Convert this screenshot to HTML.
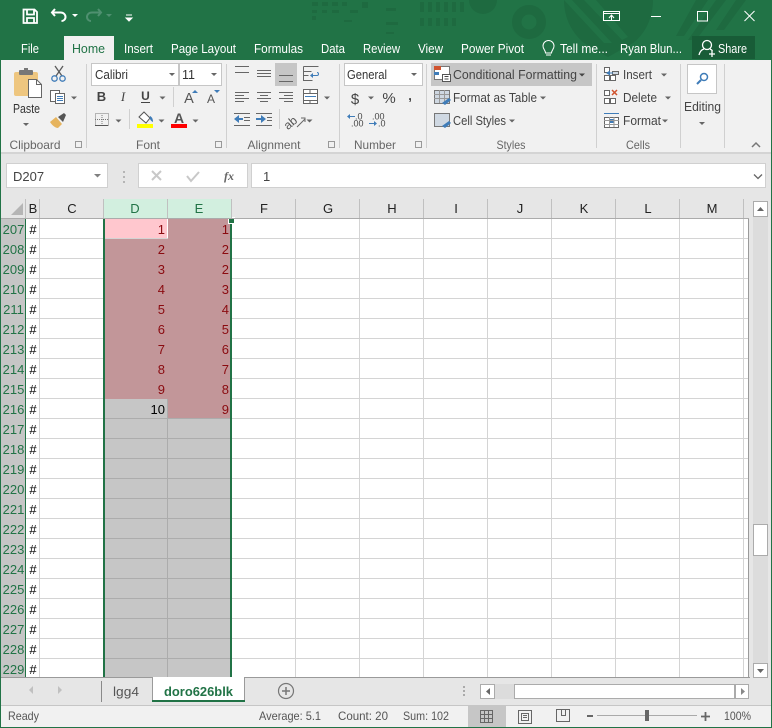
<!DOCTYPE html>
<html><head><meta charset="utf-8"><style>
html,body{margin:0;padding:0;width:772px;height:728px;overflow:hidden;background:#f1f1f1}
svg{display:block}
text{font-family:"Liberation Sans",sans-serif;font-size:12.5px;fill:#444}
.t{fill:#fff;font-size:12.5px}
.g{fill:#666;font-size:12px;text-anchor:middle}
.h{font-size:13px;fill:#222;text-anchor:middle}
.hs{font-size:13px;fill:#217346;text-anchor:middle}
.r{font-size:13px;fill:#217346;text-anchor:middle}
.n{font-size:13px;fill:#000;text-anchor:middle}
.c{font-size:13px;fill:#8a0b10;text-anchor:end}
.sb{font-size:12px;fill:#555}
</style></head><body>
<svg width="772" height="728" viewBox="0 0 772 728" xmlns="http://www.w3.org/2000/svg">
<!-- title bar -->
<rect width="772" height="60" fill="#217346"/>
<g fill="#1e6a40">
<circle cx="529" cy="22" r="11" fill="none" stroke="#1e6a40" stroke-width="7"/>
<circle cx="529" cy="22" r="15" fill="none" stroke="#1e6a40" stroke-width="4"/>
<path d="M469 0h28a14 14 0 0 1-28 0z"/>
<path d="M564 0h89c0 18-8 34-20 43l-25 14-24-14c-12-10-20-25-20-43z"/>
<path d="M696 0h12l-24 36h-8zM716 0h10l-30 40h-8zM736 0h10l-22 30h-8z"/>
<path d="M312 2h6v4h-6zM322 2h6v4h-6zM332 2h6v4h-6zM342 2h5v4h-5zM312 10h5v3h-5zM322 10h5v3h-5zM332 10h7v3h-7zM350 10h8v3h-8zM362 2h6v6h-6zM312 16h4v4h-4zM344 20h8v2h-8zM420 2h4v10h-4zM428 2h4v10h-4zM436 2h4v10h-4zM444 2h4v10h-4zM452 2h4v10h-4zM460 2h4v10h-4zM420 18h4v8h-4zM428 18h4v8h-4zM436 18h4v8h-4zM444 18h4v8h-4zM452 18h4v8h-4zM386 8h10v3h-10zM386 22h12v3h-12zM386 32h8v2h-8z"/>
</g>
<path d="M564 0l40 43h8L572 0zM584 0l38 40 6-3L596 0z" fill="#217346"/>
<!-- QAT -->
<path d="M23.500 9.500h11l2.500 2.500v11h-13.500z M27 9.500v5h7v-5 M27 23v-5h7v5" fill="none" stroke="#fff" stroke-width="1.800"/>
<path d="M55 9l-3 3.500 3 3.500M52.500 12.500h8c3 0 5 2 5 4.500s-2 4-4 4" fill="none" stroke="#fff" stroke-width="2"/>
<path d="M72 14h6l-3 3z" fill="#fff"/>
<path d="M98 9l3 3.500-3 3.500M100 12.500h-8c-3 0-5 2-5 4.500s2 4 4 4" fill="none" stroke="#4f9070" stroke-width="2"/>
<path d="M106 14h6l-3 3z" fill="#4f9070"/>
<path d="M126 15h6M126 18h6l-3 3z" fill="#fff" stroke="#fff" stroke-width="1"/>
<!-- window controls -->
<rect x="603.500" y="11.500" width="16" height="9" fill="none" stroke="#fff"/><path d="M603 13.500h17" stroke="#fff"/><path d="M609 18l2.500-3 2.500 3M611.500 15v5" fill="none" stroke="#fff"/>
<path d="M651 16.500h10" stroke="#fff" stroke-width="1"/>
<rect x="697.500" y="11.500" width="10" height="9.500" fill="none" stroke="#fff"/>
<path d="M744.500 11l10 10M754.500 11l-10 10" stroke="#fff" stroke-width="1"/>
<!-- tabs -->
<rect x="64" y="36" width="50" height="25" fill="#f1f1f1"/>
<rect x="692" y="36" width="63" height="23" fill="#185c37"/>
<text class="t" x="21" y="53" textLength="18" lengthAdjust="spacingAndGlyphs">File</text>
<text x="72" y="53" textLength="33" lengthAdjust="spacingAndGlyphs" style="fill:#217346">Home</text>
<text class="t" x="124" y="53" textLength="29" lengthAdjust="spacingAndGlyphs">Insert</text>
<text class="t" x="171" y="53" textLength="65" lengthAdjust="spacingAndGlyphs">Page Layout</text>
<text class="t" x="254" y="53" textLength="49" lengthAdjust="spacingAndGlyphs">Formulas</text>
<text class="t" x="321" y="53" textLength="24" lengthAdjust="spacingAndGlyphs">Data</text>
<text class="t" x="363" y="53" textLength="37" lengthAdjust="spacingAndGlyphs">Review</text>
<text class="t" x="418" y="53" textLength="25" lengthAdjust="spacingAndGlyphs">View</text>
<text class="t" x="461" y="53" textLength="63" lengthAdjust="spacingAndGlyphs">Power Pivot</text>
<path d="M545.500 53c0-3-2.500-3.500-2.500-7a5.500 5.500 0 0 1 11 0c0 3.500-2.500 4-2.500 7zM546 55h5" fill="none" stroke="#fff"/>
<text class="t" x="560" y="53" textLength="48" lengthAdjust="spacingAndGlyphs">Tell me...</text>
<text class="t" x="620" y="53" textLength="62" lengthAdjust="spacingAndGlyphs">Ryan Blun...</text>
<circle cx="707" cy="45" r="4.500" fill="none" stroke="#fff" stroke-width="1.300"/>
<path d="M699 55c1-4 3-5.500 5-6M710 49c1 .5 2 1 2.500 2M709 54h6M712 51v6" fill="none" stroke="#fff" stroke-width="1.300"/>
<text class="t" x="718" y="53" textLength="29" lengthAdjust="spacingAndGlyphs">Share</text>

<!-- ribbon -->
<rect x="1" y="60" width="770" height="92" fill="#f1f1f1"/>
<rect x="0" y="152" width="772" height="2" fill="#d4d4d4"/>
<rect y="154" width="772" height="45" fill="#e6e6e6"/>
<g fill="#d0d0d0">
<rect x="86" y="64" width="1" height="84"/><rect x="226" y="64" width="1" height="84"/><rect x="339" y="64" width="1" height="84"/><rect x="426" y="64" width="1" height="84"/><rect x="596" y="64" width="1" height="84"/><rect x="680" y="64" width="1" height="84"/><rect x="724" y="64" width="1" height="84"/>
<rect x="173" y="87" width="1" height="20"/><rect x="129" y="109" width="1" height="20"/><rect x="279" y="109" width="1" height="20"/>
</g>
<!-- clipboard -->
<rect x="14" y="72" width="24" height="24" rx="2" fill="#eec67f"/>
<rect x="19" y="70" width="14" height="5" rx="1" fill="#777"/><rect x="24" y="68" width="4" height="4" fill="#777"/>
<path d="M28.500 79.500h8l5 5v13h-13z" fill="#fff" stroke="#666"/><path d="M36.500 79.500v5h5" fill="none" stroke="#666"/>
<text x="13" y="113" textLength="27" lengthAdjust="spacingAndGlyphs" style="fill:#333">Paste</text>
<path d="M23 123h6l-3 3z" fill="#666"/>
<path d="M55 66l7 10M63 66l-7 10" fill="none" stroke="#5a5a5a" stroke-width="1.300"/>
<circle cx="54.500" cy="78.500" r="2.700" fill="none" stroke="#3f7cb8" stroke-width="1.300"/><circle cx="62.500" cy="78.500" r="2.700" fill="none" stroke="#3f7cb8" stroke-width="1.300"/>
<rect x="50.500" y="90.500" width="9" height="11" fill="#fff" stroke="#666"/><rect x="55.500" y="93.500" width="9" height="10" fill="#fff" stroke="#666"/><path d="M57 96.500h6M57 98.500h6M57 100.500h6" stroke="#3f7cb8"/>
<path d="M71 96.500h6l-3 3z" fill="#666"/>
<path d="M50 122l6-5 6 7-4 4c-3 0-6-3-8-6z" fill="#e6b45e"/><path d="M58 117l6-4 2 2-3 7z" fill="#555"/>
<text class="g" x="35" y="149" textLength="51" lengthAdjust="spacingAndGlyphs">Clipboard</text>
<!-- font -->
<rect x="91.500" y="63.500" width="87" height="22" fill="#fff" stroke="#c6c6c6"/>
<rect x="179.500" y="63.500" width="42" height="22" fill="#fff" stroke="#c6c6c6"/>
<text x="95" y="79" textLength="33" lengthAdjust="spacingAndGlyphs" style="fill:#333">Calibri</text>
<text x="182" y="79" style="fill:#333">11</text>
<path d="M169 73h6l-3 3zM211 73h6l-3 3z" fill="#666"/>
<text x="101.500" y="101" style="font:bold 13px 'Liberation Sans';fill:#444" text-anchor="middle">B</text>
<text x="123" y="101" style="font:italic 13px 'Liberation Serif';fill:#444" text-anchor="middle">I</text>
<text x="145.500" y="100" style="font:bold 12px 'Liberation Sans';fill:#444" text-anchor="middle">U</text>
<path d="M141 102.500h9" stroke="#444"/>
<path d="M159.500 96.500h6l-3 3z" fill="#666"/>
<text x="189" y="103" style="font-size:14.500px;fill:#555" text-anchor="middle">A</text>
<path d="M192 93l3-3 3 3z" fill="#3f7cb8"/>
<text x="211" y="103" style="font-size:12px;fill:#555" text-anchor="middle">A</text>
<path d="M214 90h6l-3 3z" fill="#3f7cb8"/>
<rect x="95.500" y="113.500" width="13" height="12" fill="none" stroke="#777" stroke-dasharray="1 1"/><path d="M102 113v12M95 119.500h13" stroke="#777" stroke-dasharray="1 1"/><path d="M95 125.500h13" stroke="#555"/>
<path d="M115.500 119.500h6l-3 3z" fill="#666"/>
<path d="M139 117l5-5 6 6-4 5z" fill="#fff" stroke="#555"/><path d="M150 116c2 1 3 3 3 6-2-1-4-3-3-6z" fill="#3f7cb8"/>
<rect x="137" y="124" width="16" height="4" fill="#ffff00"/>
<path d="M158.500 119.500h6l-3 3z" fill="#666"/>
<text x="179" y="123" style="font:bold 14px 'Liberation Sans';fill:#555" text-anchor="middle">A</text>
<rect x="171" y="124" width="16" height="4" fill="#ff0000"/>
<path d="M192.500 119.500h6l-3 3z" fill="#666"/>
<text class="g" x="148" y="149" textLength="24" lengthAdjust="spacingAndGlyphs">Font</text>
<!-- alignment -->
<rect x="275" y="63" width="22" height="23" fill="#c6c6c6"/>
<g stroke="#666" fill="none">
<path d="M235 66.500h14M235 72.500h14"/>
<path d="M257 70.500h14M257 73.500h14M257 76.500h14"/>
<path d="M279 75.500h14M279 81.500h14"/>
<path d="M235 92.500h14M235 95.500h9M235 98.500h14M235 101.500h9"/>
<path d="M257 92.500h14M260 95.500h8M257 98.500h14M260 101.500h8"/>
<path d="M279 92.500h14M284 95.500h9M279 98.500h14M284 101.500h9"/>
<path d="M234 113.500h16M244 117.500h6M244 120.500h6M234 125.500h16"/>
<path d="M256 113.500h16M267 117.500h5M267 120.500h5M256 125.500h16"/>
<path d="M303.500 66.500h15M303.500 66.500v14h9M303.500 71.500h8M303.500 75.500h5"/>
<rect x="303.500" y="89.500" width="14" height="14" fill="#fff"/>
<path d="M303 93.500h15M303 100.500h15M310 89v4M310 100v4"/>
</g>
<path d="M311 75.500h6c2 0 2-3 0-3" stroke="#3f7cb8" fill="none"/><path d="M313 73l-3 2.500 3 2.500z" fill="#3f7cb8"/>
<path d="M305 96.500h11" stroke="#3f7cb8"/>
<path d="M324 96.500h6l-3 3z" fill="#666"/>
<path d="M234 119l5-4v8zM239 118h4v2h-4z" fill="#3f7cb8"/><path d="M266 119l-5-4v8zM256 118h5v2h-5z" fill="#3f7cb8"/>
<text x="293" y="126" transform="rotate(-40 293 126)" style="font-size:12px;fill:#555" text-anchor="middle">ab</text>
<path d="M297 127l8-8M301 118h4v4" stroke="#666" fill="none"/>
<path d="M306.500 119.500h6l-3 3z" fill="#666"/>
<text class="g" x="274" y="149" textLength="53" lengthAdjust="spacingAndGlyphs">Alignment</text>
<!-- number -->
<rect x="344.500" y="63.500" width="78" height="22" fill="#fff" stroke="#c6c6c6"/>
<text x="347" y="79" textLength="40" lengthAdjust="spacingAndGlyphs" style="fill:#333">General</text>
<path d="M411 73h6l-3 3z" fill="#666"/>
<text x="355" y="104" style="font-size:15px;fill:#444" text-anchor="middle">$</text>
<path d="M368 96.500h6l-3 3z" fill="#666"/>
<text x="389" y="103" style="font-size:15px;fill:#444" text-anchor="middle">%</text>
<text x="410" y="100" style="font:bold 13px 'Liberation Sans';fill:#444" text-anchor="middle">,</text>
<text x="355" y="119.500" style="font-size:9px;fill:#444">.0</text><text x="351" y="126.500" style="font-size:9px;fill:#444">.00</text>
<path d="M347 116.500l3-2.500v5zM350 116h5v1h-5z" fill="#3f7cb8"/>
<text x="372" y="119.500" style="font-size:9px;fill:#444">.00</text><text x="378" y="126.500" style="font-size:9px;fill:#444">.0</text>
<path d="M377 123.500l-3-2.500v5zM369 123h5v1h-5z" fill="#3f7cb8"/>
<text class="g" x="375" y="149" textLength="42" lengthAdjust="spacingAndGlyphs">Number</text>
<path d="M75.500 141.500h6v6h-6zM215.500 141.500h6v6h-6zM328.500 141.500h6v6h-6zM415.500 141.500h6v6h-6z" fill="none" stroke="#999"/>
<!-- styles -->
<rect x="431" y="63" width="161" height="23" fill="#c6c6c6"/>
<rect x="434.500" y="66.500" width="15" height="13" fill="#fff" stroke="#777"/><rect x="434" y="66" width="7" height="4" fill="#d0532e"/><rect x="434" y="72" width="5" height="3" fill="#3f7cb8"/><rect x="442.500" y="74.500" width="8" height="7" fill="#fff" stroke="#555"/><path d="M444.500 76.500h4M444.500 79h4" stroke="#444"/>
<rect x="434.500" y="90.500" width="15" height="13" fill="#cfd8e2" stroke="#777"/><path d="M434 94.500h15M434 98.500h15M439.500 90v13M444.500 90v13" stroke="#999"/><path d="M442 103l7-5 2 2-6 5z" fill="#3f7cb8"/>
<rect x="434.500" y="113.500" width="15" height="13" fill="#cfd8e2" stroke="#777"/><path d="M442 126l7-5 2 2-6 5z" fill="#3f7cb8"/>
<text x="453" y="79" textLength="124" lengthAdjust="spacingAndGlyphs">Conditional Formatting</text>
<path d="M579 73.500h6l-3 3z" fill="#444"/>
<text x="453" y="102" textLength="84" lengthAdjust="spacingAndGlyphs">Format as Table</text>
<path d="M540 96.500h6l-3 3z" fill="#666"/>
<text x="453" y="125" textLength="53" lengthAdjust="spacingAndGlyphs">Cell Styles</text>
<path d="M509 119.500h6l-3 3z" fill="#666"/>
<text class="g" x="511" y="149" textLength="29" lengthAdjust="spacingAndGlyphs">Styles</text>
<!-- cells -->
<g stroke="#666" fill="#fff">
<path d="M604.500 67.500h5v5h-5zM604.500 75.500h5v5h-5zM610.500 75.500h5v5h-5z"/>
<path d="M612.500 71.500h6v3h-6z" fill="#cfd8e2"/>
<path d="M604.500 90.500h5v5h-5zM604.500 98.500h5v5h-5zM610.500 98.500h5v5h-5z"/>
<rect x="604.500" y="117.500" width="14" height="10"/>
</g>
<path d="M606 73l4-2.500v2h3v1h-3v2z" fill="#3f7cb8"/>
<path d="M612 90l5 5M617 90l-5 5" stroke="#d0532e" stroke-width="1.500"/>
<path d="M604 113.500h15" stroke="#3f7cb8"/><rect x="609" y="119" width="5" height="4" fill="#3f7cb8"/><path d="M604 120.500h15M604 124.500h15M609.500 117v10M614 117v10" stroke="#999"/>
<text x="623" y="79" textLength="29" lengthAdjust="spacingAndGlyphs">Insert</text>
<text x="623" y="102" textLength="34" lengthAdjust="spacingAndGlyphs">Delete</text>
<text x="623" y="125" textLength="38" lengthAdjust="spacingAndGlyphs">Format</text>
<path d="M661 73.500h6l-3 3zM665 96.500h6l-3 3zM662 119.500h6l-3 3z" fill="#666"/>
<text class="g" x="638" y="149" textLength="24" lengthAdjust="spacingAndGlyphs">Cells</text>
<!-- editing -->
<rect x="687.500" y="64.500" width="29" height="29" fill="#fff" stroke="#c6c6c6"/>
<circle cx="704" cy="77" r="3.500" fill="none" stroke="#3f7cb8" stroke-width="1.500"/><path d="M701 80l-4 4" stroke="#3f7cb8" stroke-width="2"/>
<text x="684" y="111" textLength="37" lengthAdjust="spacingAndGlyphs">Editing</text>
<path d="M699 122h6l-3 3z" fill="#666"/>
<path d="M752 147l4-4 4 4" fill="none" stroke="#777" stroke-width="1.500"/>
<!-- formula bar -->
<rect x="6.500" y="163.500" width="101" height="24" fill="#fff" stroke="#d0d0d0"/>
<text x="13" y="181" style="font-size:13px;fill:#444">D207</text>
<path d="M94 174h7l-3.500 3.500z" fill="#808080"/>
<path d="M123 171h2v2h-2zM123 176h2v2h-2zM123 181h2v2h-2z" fill="#b5b5b5"/>
<rect x="138.500" y="163.500" width="109" height="24" fill="#fff" stroke="#d0d0d0"/>
<path d="M152 171l9 9M161 171l-9 9" stroke="#c8c8c8" stroke-width="2"/>
<path d="M187 176l4 5 8-9" fill="none" stroke="#c8c8c8" stroke-width="2"/>
<text x="229" y="180" style="font:italic bold 12px 'Liberation Serif';fill:#666" text-anchor="middle">fx</text>
<rect x="251.500" y="163.500" width="514" height="24" fill="#fff" stroke="#d0d0d0"/>
<text x="263" y="181" style="font-size:13px;fill:#444">1</text>
<path d="M754 174.500l4 4 4-4" fill="none" stroke="#666" stroke-width="1.300"/>

<!-- grid -->
<rect x="1" y="199" width="770" height="479" fill="#e6e6e6"/>
<rect x="40" y="219" width="709" height="459" fill="#fff"/>
<rect x="26" y="219" width="14" height="459" fill="#fff"/>
<rect x="1" y="219" width="24" height="459" fill="#c6c6c6"/>
<g stroke="#d4d4d4">
<path d="M26 238.500h723M26 258.500h723M26 278.500h723M26 298.500h723M26 318.500h723M26 338.500h723M26 358.500h723M26 378.500h723M26 398.500h723M26 418.500h723M26 438.500h723M26 458.500h723M26 478.500h723M26 498.500h723M26 518.500h723M26 538.500h723M26 558.500h723M26 578.500h723M26 598.500h723M26 618.500h723M26 638.500h723M26 658.500h723"/>
<path d="M39.500 219v459M103.500 219v459M295.500 219v459M359.500 219v459M423.500 219v459M487.500 219v459M551.500 219v459M615.500 219v459M679.500 219v459M743.500 219v459"/>
</g>
<!-- selection -->
<rect x="105" y="399" width="62" height="279" fill="#c6c6c6"/>
<rect x="168" y="419" width="62" height="259" fill="#c6c6c6"/>
<rect x="105" y="239" width="63" height="160" fill="#c29699"/>
<rect x="168" y="219" width="62" height="200" fill="#c29699"/>
<rect x="105" y="219" width="62" height="19" fill="#ffc7ce"/>
<path d="M105 418.500h125M105 438.500h125M105 458.500h125M105 478.500h125M105 498.500h125M105 518.500h125M105 538.500h125M105 558.500h125M105 578.500h125M105 598.500h125M105 618.500h125M105 638.500h125M105 658.500h125M167.500 399v279" stroke="#acacac"/>
<rect x="103" y="219" width="2" height="459" fill="#217346"/>
<rect x="230" y="219" width="2" height="459" fill="#217346"/>
<rect x="25" y="219" width="1" height="459" fill="#217346"/>
<rect x="228" y="217" width="7" height="7" fill="#fff"/>
<rect x="229" y="218" width="5" height="5" fill="#217346"/>
<rect x="26" y="677" width="724" height="1" fill="#9a9a9a"/>
<rect x="748" y="219" width="1" height="459" fill="#9a9a9a"/>
<!-- col headers -->
<rect x="104" y="199" width="128" height="19" fill="#d2efdf"/>
<rect x="0" y="218" width="749" height="1" fill="#ababab"/>
<path d="M25.500 199v19M39.500 199v19M103.500 199v19M167.500 199v19M231.500 199v19M295.500 199v19M359.500 199v19M423.500 199v19M487.500 199v19M551.500 199v19M615.500 199v19M679.500 199v19M743.500 199v19" stroke="#c0c0c0"/>
<path d="M23 203v12h-12z" fill="#b5b5b5"/>
<text class="h" x="33" y="213">B</text><text class="h" x="72" y="213">C</text>
<text class="hs" x="135" y="213">D</text><text class="hs" x="199" y="213">E</text>
<text class="h" x="264" y="213">F</text><text class="h" x="328" y="213">G</text><text class="h" x="392" y="213">H</text><text class="h" x="456" y="213">I</text><text class="h" x="520" y="213">J</text><text class="h" x="584" y="213">K</text><text class="h" x="648" y="213">L</text><text class="h" x="712" y="213">M</text>
<!-- row labels -->
<text class="r" x="13.500" y="234">207</text><text class="r" x="13.500" y="254">208</text><text class="r" x="13.500" y="274">209</text><text class="r" x="13.500" y="294">210</text><text class="r" x="13.500" y="314">211</text><text class="r" x="13.500" y="334">212</text><text class="r" x="13.500" y="354">213</text><text class="r" x="13.500" y="374">214</text><text class="r" x="13.500" y="394">215</text><text class="r" x="13.500" y="414">216</text><text class="r" x="13.500" y="434">217</text><text class="r" x="13.500" y="454">218</text><text class="r" x="13.500" y="474">219</text><text class="r" x="13.500" y="494">220</text><text class="r" x="13.500" y="514">221</text><text class="r" x="13.500" y="534">222</text><text class="r" x="13.500" y="554">223</text><text class="r" x="13.500" y="574">224</text><text class="r" x="13.500" y="594">225</text><text class="r" x="13.500" y="614">226</text><text class="r" x="13.500" y="634">227</text><text class="r" x="13.500" y="654">228</text><text class="r" x="13.500" y="674">229</text>
<!-- hashes -->
<text class="n" x="33" y="234">#</text><text class="n" x="33" y="254">#</text><text class="n" x="33" y="274">#</text><text class="n" x="33" y="294">#</text><text class="n" x="33" y="314">#</text><text class="n" x="33" y="334">#</text><text class="n" x="33" y="354">#</text><text class="n" x="33" y="374">#</text><text class="n" x="33" y="394">#</text><text class="n" x="33" y="414">#</text><text class="n" x="33" y="434">#</text><text class="n" x="33" y="454">#</text><text class="n" x="33" y="474">#</text><text class="n" x="33" y="494">#</text><text class="n" x="33" y="514">#</text><text class="n" x="33" y="534">#</text><text class="n" x="33" y="554">#</text><text class="n" x="33" y="574">#</text><text class="n" x="33" y="594">#</text><text class="n" x="33" y="614">#</text><text class="n" x="33" y="634">#</text><text class="n" x="33" y="654">#</text><text class="n" x="33" y="674">#</text>
<!-- values -->
<text class="c" x="165" y="234">1</text><text class="c" x="165" y="254">2</text><text class="c" x="165" y="274">3</text><text class="c" x="165" y="294">4</text><text class="c" x="165" y="314">5</text><text class="c" x="165" y="334">6</text><text class="c" x="165" y="354">7</text><text class="c" x="165" y="374">8</text><text class="c" x="165" y="394">9</text><text class="c" x="165" y="414" style="fill:#000">10</text>
<text class="c" x="229" y="234">1</text><text class="c" x="229" y="254">2</text><text class="c" x="229" y="274">2</text><text class="c" x="229" y="294">3</text><text class="c" x="229" y="314">4</text><text class="c" x="229" y="334">5</text><text class="c" x="229" y="354">6</text><text class="c" x="229" y="374">7</text><text class="c" x="229" y="394">8</text><text class="c" x="229" y="414">9</text>
<!-- v scroll -->
<rect x="753" y="201" width="15" height="477" fill="#dcdcdc"/>
<rect x="753.500" y="201.500" width="14" height="15" fill="#fff" stroke="#ababab"/>
<path d="M757 211h7l-3.500-4z" fill="#666"/>
<rect x="753.500" y="524.500" width="14" height="31" fill="#fff" stroke="#ababab"/>
<rect x="753.500" y="663.500" width="14" height="14" fill="#fff" stroke="#ababab"/>
<path d="M757 669h7l-3.500 4z" fill="#666"/>
<!-- sheet tabs -->
<rect x="1" y="678" width="770" height="27" fill="#e6e6e6"/>
<rect x="1" y="677" width="748" height="1" fill="#9a9a9a"/>
<path d="M33 686v8l-4-4zM58 686v8l4-4z" fill="#c0c0c0"/>
<rect x="101" y="681" width="1" height="21" fill="#8a8a8a"/>
<text x="113" y="696" textLength="26" lengthAdjust="spacingAndGlyphs" style="fill:#555;font-size:13px">lgg4</text>
<rect x="153" y="677" width="91" height="24" fill="#fff"/>
<rect x="152" y="700" width="93" height="2" fill="#217346"/>
<path d="M152.500 678v22M244.500 678v22" stroke="#9a9a9a"/>
<text x="164" y="696" textLength="69" lengthAdjust="spacingAndGlyphs" style="fill:#217346;font-size:13px;font-weight:bold">doro626blk</text>
<circle cx="286" cy="691" r="7.500" fill="none" stroke="#777" stroke-width="1.200"/><path d="M282 691h8M286 687v8" stroke="#777" stroke-width="1.500"/>
<path d="M463 686h2v2h-2zM463 690h2v2h-2zM463 694h2v2h-2z" fill="#aaa"/>
<rect x="494" y="684" width="20" height="15" fill="#dcdcdc"/>
<rect x="480.500" y="684.500" width="14" height="14" fill="#fff" stroke="#ababab"/>
<path d="M490 688v7l-4-3.500z" fill="#666"/>
<rect x="514.500" y="684.500" width="220" height="14" fill="#fff" stroke="#ababab"/>
<rect x="735.500" y="684.500" width="13" height="14" fill="#fff" stroke="#ababab"/>
<path d="M741 688v7l4-3.500z" fill="#888"/>
<!-- status -->
<rect x="1" y="705" width="770" height="1" fill="#c6c6c6"/>
<rect x="1" y="706" width="770" height="21" fill="#f1f1f1"/>
<rect x="468" y="706" width="38" height="21" fill="#c6c6c6"/>
<text class="sb" x="8" y="720" textLength="31" lengthAdjust="spacingAndGlyphs">Ready</text>
<text class="sb" x="259" y="720" textLength="62" lengthAdjust="spacingAndGlyphs">Average: 5.1</text>
<text class="sb" x="338" y="720" textLength="50" lengthAdjust="spacingAndGlyphs">Count: 20</text>
<text class="sb" x="403" y="720" textLength="46" lengthAdjust="spacingAndGlyphs">Sum: 102</text>
<g stroke="#666" fill="none">
<rect x="480.500" y="710.500" width="12" height="12"/><path d="M484.500 710v12M488.500 710v12M480 714.500h13M480 718.500h13"/>
<rect x="518.500" y="710.500" width="13" height="13"/><rect x="521.500" y="713.500" width="7" height="7"/><path d="M523 715.500h4M523 717.500h4"/>
<path d="M556.500 709.500h13v12h-13zM561.500 709.500v6h4v-6"/>
</g>
<rect x="587" y="715" width="6" height="2" fill="#666"/>
<rect x="597" y="715" width="100" height="1" fill="#aaa"/>
<rect x="645" y="710" width="4" height="11" fill="#666"/>
<path d="M701 716.500h9M705.500 712v9" stroke="#666" stroke-width="1.800"/>
<text class="sb" x="724" y="720" textLength="27" lengthAdjust="spacingAndGlyphs">100%</text>
<!-- window border -->
<rect x="0" y="0" width="1" height="728" fill="#217346"/>
<rect x="771" y="0" width="1" height="728" fill="#217346"/>
<rect x="0" y="727" width="772" height="1" fill="#217346"/>
</svg>
</body></html>
